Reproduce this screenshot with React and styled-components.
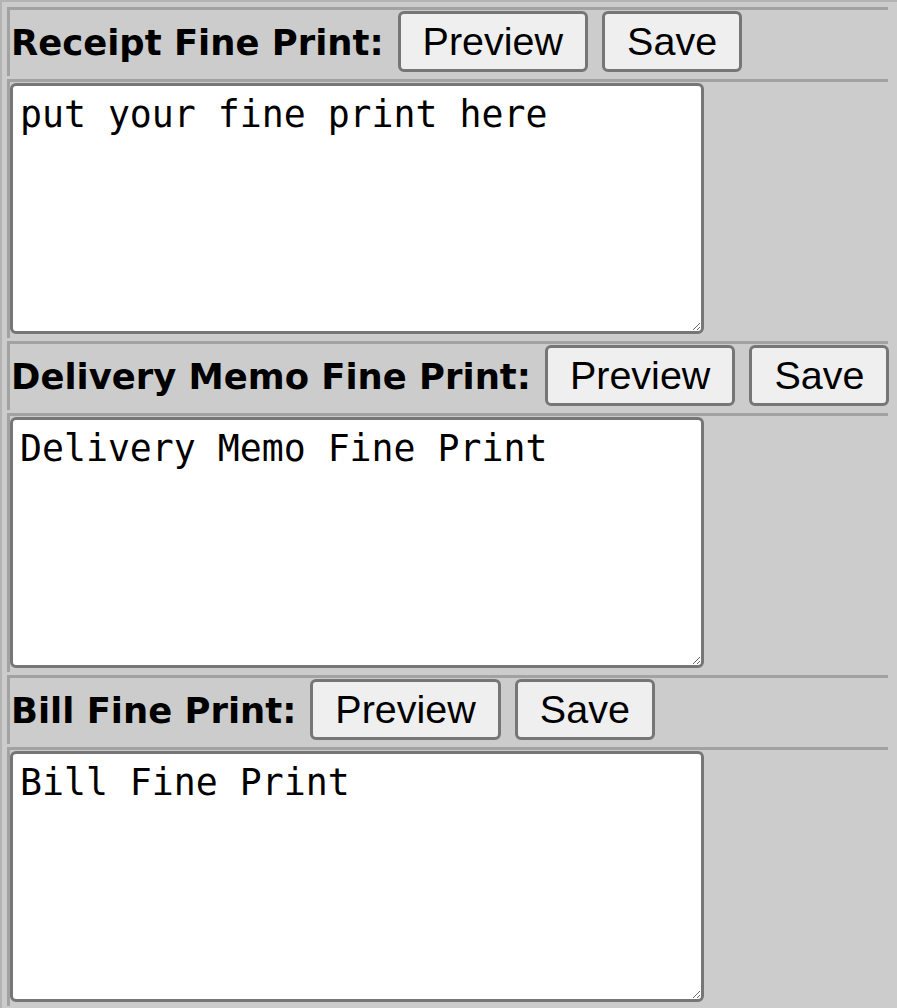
import React, { useState } from "react";
import styled, { createGlobalStyle } from "styled-components";

const GlobalStyle = createGlobalStyle`
  html, body {
    margin: 0;
    padding: 0;
    background: #cbcccb;
  }
`;

const sections = [
  { key: "receipt", label: "Receipt Fine Print:", text: "put your fine print here" },
  { key: "memo", label: "Delivery Memo Fine Print:", text: "Delivery Memo Fine Print" },
  { key: "bill", label: "Bill Fine Print:", text: "Bill Fine Print" }
];

const Table = styled.div`
  border-top: 2px solid #b3b3b3;
  border-left: 2px solid #b3b3b3;
  padding: 5px 9px 0 5px;
  min-height: 1006px;
  box-sizing: border-box;
  overflow: hidden;
`;

const Cell = styled.div`
  border-top: 3px solid #a2a2a2;
  border-left: 3px solid #a2a2a2;
  padding: 1px 0 4px 0;
  margin-bottom: 3px;
`;

const HeaderRow = styled(Cell)`
  display: flex;
  align-items: baseline;
  gap: 14px;
  padding-left: 1px;
  white-space: nowrap;
`;

const Label = styled.span`
  flex-shrink: 0;
  font-family: "DejaVu Sans", Verdana, sans-serif;
  font-weight: bold;
  font-size: 35.4px;
  color: #000;
`;

const Button = styled.button`
  flex-shrink: 0;
  height: 61px;
  padding: 0 22px;
  font-family: "Liberation Sans", Arial, sans-serif;
  font-size: 39.5px;
  color: #000;
  background: #efefef;
  border: 3px solid #767676;
  border-radius: 6px;
  cursor: pointer;
`;

const TextArea = styled.textarea`
  display: block;
  width: 694px;
  height: 251px;
  box-sizing: border-box;
  margin: 0;
  padding: 7px 7px;
  border: 3px solid #767676;
  border-radius: 6px;
  background: #fff;
  font-family: "DejaVu Sans Mono", monospace;
  font-size: 36.5px;
  color: #000;
`;

const FinePrint = ({ label, initial }) => {
  const [value, setValue] = useState(initial);
  return (
    <>
      <HeaderRow>
        <Label>{label}</Label>
        <Button type="button">Preview</Button>
        <Button type="button">Save</Button>
      </HeaderRow>
      <Cell>
        <TextArea value={value} onChange={e => setValue(e.target.value)} />
      </Cell>
    </>
  );
};

const App = () => (
  <>
    <GlobalStyle />
    <Table>
      {sections.map(s => (
        <FinePrint key={s.key} label={s.label} initial={s.text} />
      ))}
    </Table>
  </>
);

export default App;
